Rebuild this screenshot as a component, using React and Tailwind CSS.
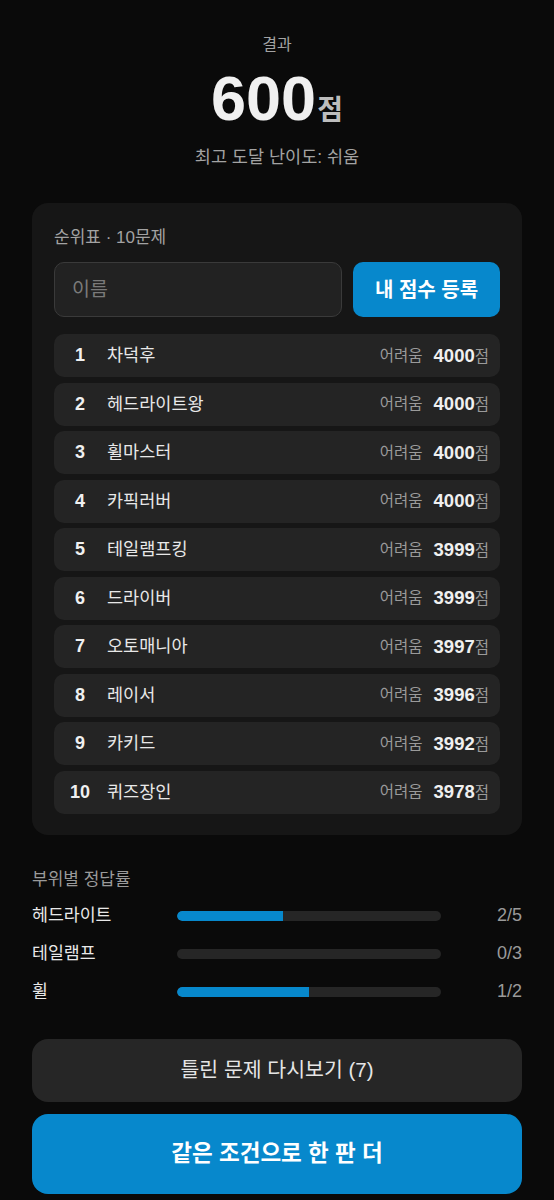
const ranking = [
  { rank: 1, name: '차덕후', level: '어려움', score: 4000 },
  { rank: 2, name: '헤드라이트왕', level: '어려움', score: 4000 },
  { rank: 3, name: '휠마스터', level: '어려움', score: 4000 },
  { rank: 4, name: '카픽러버', level: '어려움', score: 4000 },
  { rank: 5, name: '테일램프킹', level: '어려움', score: 3999 },
  { rank: 6, name: '드라이버', level: '어려움', score: 3999 },
  { rank: 7, name: '오토매니아', level: '어려움', score: 3997 },
  { rank: 8, name: '레이서', level: '어려움', score: 3996 },
  { rank: 9, name: '카키드', level: '어려움', score: 3992 },
  { rank: 10, name: '퀴즈장인', level: '어려움', score: 3978 },
]

const parts = [
  { name: '헤드라이트', correct: 2, total: 5 },
  { name: '테일램프', correct: 0, total: 3 },
  { name: '휠', correct: 1, total: 2 },
]

export default function App() {
  return (
    <div
      className="min-h-[1200px] bg-[#0a0a0a] px-8 text-white"
      style={{ fontFamily: '"Liberation Sans", "Noto Sans CJK KR", sans-serif' }}
    >
      {/* 결과 */}
      <div className="flex flex-col items-center pt-[34px]">
        <p className="text-[16px] leading-[22px] text-[#a3a3a3]">결과</p>
        <div className="mt-[6px] flex items-baseline">
          <span className="text-[63px] font-bold leading-[72px] text-[#f0f0f0]">600</span>
          <span className="ml-[1px] text-[28px] font-bold text-[#bdbdbd]">점</span>
        </div>
        <p className="mt-[12px] text-[17.5px] leading-[22px] text-[#a3a3a3]">최고 도달 난이도: 쉬움</p>
      </div>

      {/* 순위표 */}
      <div className="mt-[35px] rounded-2xl bg-[#161616] px-[22px] pb-[21px] pt-[24px]">
        <p className="text-[17px] leading-[22px] text-[#a3a3a3]">순위표 · 10문제</p>
        <div className="mt-[13px] flex gap-[11px]">
          <input
            placeholder="이름"
            className="h-[55px] min-w-0 flex-1 rounded-[10px] border border-[#3a3a3a] bg-[#222222] px-[17px] text-[19.5px] text-white outline-none placeholder:text-[#7a7a7a]"
          />
          <button className="h-[55px] w-[147px] rounded-[10px] bg-[#0788cc] text-[20px] font-bold text-white">
            내 점수 등록
          </button>
        </div>
        <div className="mt-[17px] flex flex-col gap-[5.5px]">
          {ranking.map(r => (
            <div key={r.rank} className="flex h-[43px] items-center rounded-[10px] bg-[#242424] pl-[12px] pr-[11px]">
              <span className="w-[28px] text-center text-[18px] font-bold text-[#f0f0f0]">{r.rank}</span>
              <span className="ml-[13px] text-[17.5px] text-[#e8e8e8]">{r.name}</span>
              <span className="ml-auto text-[15.5px] text-[#9a9a9a]">{r.level}</span>
              <span className="ml-[11px] flex items-baseline">
                <span className="text-[18.5px] font-bold text-[#f0f0f0]">{r.score}</span>
                <span className="text-[15.5px] text-[#9a9a9a]">점</span>
              </span>
            </div>
          ))}
        </div>
      </div>

      {/* 부위별 정답률 */}
      <div className="mt-[34px]">
        <p className="text-[17px] leading-[22px] text-[#9a9a9a]">부위별 정답률</p>
        <div className="mt-[14px] flex flex-col gap-[16px]">
          {parts.map(p => (
            <div key={p.name} className="flex h-[22px] items-center">
              <span className="w-[145px] text-[17.3px] text-[#e8e8e8]">{p.name}</span>
              <div className="h-[10px] w-[264px] overflow-hidden rounded-full bg-[#262626]">
                <div className="h-full rounded-l-full bg-[#0788cc]" style={{ width: `${(p.correct / p.total) * 100}%` }} />
              </div>
              <span className="ml-auto text-[18px] text-[#9a9a9a]">{p.correct}/{p.total}</span>
            </div>
          ))}
        </div>
      </div>

      {/* 버튼 */}
      <div className="mt-[36px] flex flex-col gap-[12px] pb-[9px]">
        <button className="h-[63px] w-full rounded-2xl bg-[#262626] text-[20.5px] text-[#e5e5e5]">
          틀린 문제 다시보기 (7)
        </button>
        <button className="h-[80px] w-full rounded-2xl bg-[#0788cc] text-[22.5px] font-bold text-white">
          같은 조건으로 한 판 더
        </button>
      </div>
    </div>
  )
}
